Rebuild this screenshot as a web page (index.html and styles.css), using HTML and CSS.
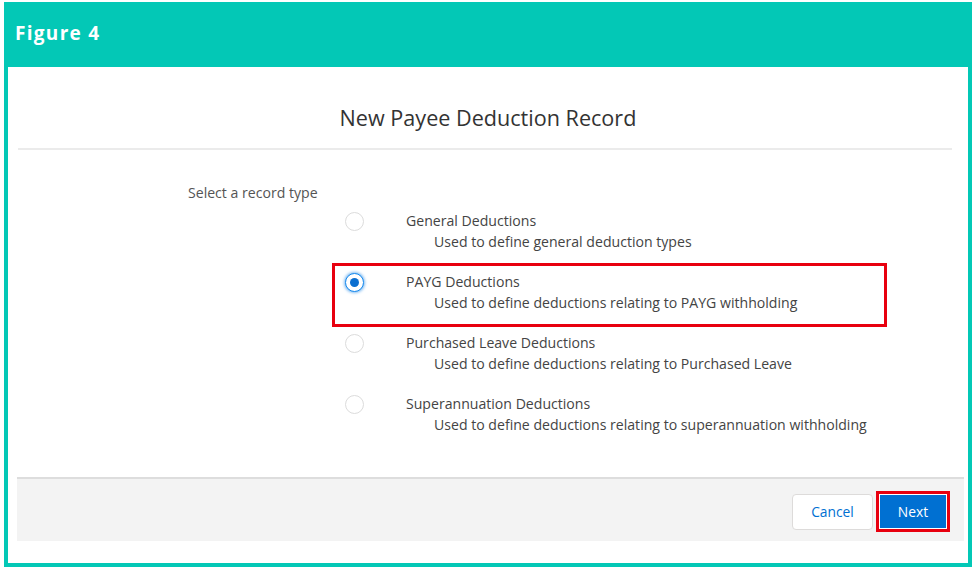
FILE: index.html
```html
<!DOCTYPE html>
<html>
<head>
<meta charset="utf-8">
<link rel="stylesheet" href="styles.css">
</head>
<body>
<div class="frame">
  <div class="band">Figure 4</div>
  <div class="content">
    <div class="modal-head">
      <h2 class="title">New Payee Deduction Record</h2>
    </div>
    <div class="divider"></div>
    <div class="modal-body">
      <div class="field-label">Select a record type</div>
      <div class="options">
        <div class="option">
          <span class="radio"></span>
          <div class="opt-text">
            <div class="opt-label">General Deductions</div>
            <div class="opt-desc">Used to define general deduction types</div>
          </div>
        </div>
        <div class="option highlighted">
          <span class="radio checked"></span>
          <div class="opt-text">
            <div class="opt-label">PAYG Deductions</div>
            <div class="opt-desc">Used to define deductions relating to PAYG withholding</div>
          </div>
        </div>
        <div class="option">
          <span class="radio"></span>
          <div class="opt-text">
            <div class="opt-label">Purchased Leave Deductions</div>
            <div class="opt-desc">Used to define deductions relating to Purchased Leave</div>
          </div>
        </div>
        <div class="option">
          <span class="radio"></span>
          <div class="opt-text">
            <div class="opt-label">Superannuation Deductions</div>
            <div class="opt-desc">Used to define deductions relating to superannuation withholding</div>
          </div>
        </div>
      </div>
    </div>
    <div class="footer">
      <button class="btn btn-neutral">Cancel</button>
      <button class="btn btn-brand">Next</button>
    </div>
  </div>
</div>
</body>
</html>
```

FILE: styles.css
```css
* { box-sizing: border-box; }
html, body { margin: 0; padding: 0; background: #fff; }
body {
  width: 976px;
  height: 570px;
  padding: 2px 4px 0 4px;
  font-family: "Open Sans", "Noto Sans", sans-serif;
  overflow: hidden;
}
.frame {
  width: 968px;
  height: 565px;
  background: #03c8b6;
  padding: 0 4px 4px 4px;
  display: flex;
  flex-direction: column;
}
.band {
  height: 65px;
  flex: none;
  color: #fff;
  font-weight: 700;
  font-size: 19px;
  letter-spacing: 1.3px;
  line-height: 62px;
  padding-left: 7px;
}
.content {
  flex: 1;
  background: #fff;
  display: flex;
  flex-direction: column;
}
.modal-head {
  height: 81px;
  padding-top: 38px;
  text-align: center;
}
.title {
  margin: 0;
  font-weight: 400;
  font-size: 21.6px;
  line-height: 26px;
  color: #333333;
}
.divider {
  height: 2px;
  background: #ebebeb;
  margin: 0 16px 0 10px;
}
.modal-body {
  flex: 1;
  padding-top: 34px;
}
.field-label {
  padding-left: 180px;
  font-size: 14.1px;
  line-height: 18px;
  color: #545454;
}
.options {
  margin-left: 324px;
  width: 555px;
}
.option {
  position: relative;
  height: 61px;
  display: flex;
  align-items: flex-start;
  padding-left: 13px;
}
.option.highlighted::after {
  content: "";
  position: absolute;
  left: 0;
  right: 0;
  top: 0;
  bottom: -3px;
  border: 3px solid #e8000f;
}
.radio {
  flex: none;
  width: 19px;
  height: 19px;
  margin-top: 10px;
  border: 1px solid #dcdcdc;
  border-radius: 50%;
  background: #fff;
  position: relative;
}
.radio.checked {
  border: 1px solid #1589ee;
  box-shadow: 0 0 3px 1px #7ab8f0;
}
.radio.checked::before {
  content: "";
  position: absolute;
  left: 4px;
  top: 4px;
  width: 9px;
  height: 9px;
  border-radius: 50%;
  background: #0b6fd0;
}
.opt-text {
  margin-left: 42px;
  padding-top: 9px;
  color: #444444;
  font-size: 14.1px;
}
.opt-label {
  line-height: 20px;
}
.opt-desc {
  padding-left: 28px;
  line-height: 22px;
}
.footer {
  flex: none;
  height: 64px;
  margin: 0 4px 22px 9px;
  background: #f3f3f3;
  border-top: 2px solid #dddddd;
  display: flex;
  align-items: center;
  justify-content: flex-end;
  padding: 3px 15px 0 0;
  gap: 7px;
}
.btn {
  font-family: "Open Sans", "Noto Sans", sans-serif;
  font-size: 13.8px;
  border-radius: 4px;
  cursor: pointer;
}
.btn-neutral {
  width: 81px;
  height: 36px;
  background: #fff;
  border: 1px solid #dddbda;
  color: #0070d2;
}
.btn-brand {
  width: 66px;
  height: 33px;
  background: #0070d2;
  border: 1px solid #0070d2;
  color: #fff;
  border-radius: 0;
  box-shadow: 0 0 0 1px #fff, 0 0 0 4px #e8000f;
  margin-right: 3px;
}
```
